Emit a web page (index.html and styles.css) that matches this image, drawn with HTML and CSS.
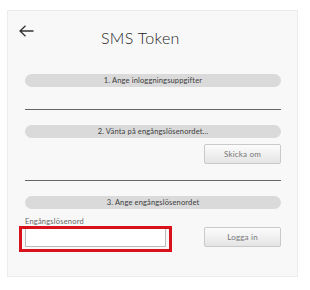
FILE: index.html
```html
<!DOCTYPE html>
<html lang="sv">
<head>
  <meta charset="UTF-8">
  <title>SMS Token</title>
  <link rel="stylesheet" href="styles.css">
</head>
<body>
  <div class="card">
    <div class="card-header">
      <svg class="back-arrow" width="15" height="12" viewBox="0 0 15 12">
        <path d="M14.5 6H1M6.5 0.8L1 6l5.5 5.2" fill="none" stroke="#333" stroke-width="1.3"/>
      </svg>
      <div class="card-title">SMS Token</div>
    </div>

    <div class="step-pill step-first">1. Ange inloggningsuppgifter</div>
    <div class="divider"></div>

    <div class="step-pill">2. Vänta på engångslösenordet...</div>
    <div class="btn-row">
      <button class="btn">Skicka om</button>
    </div>
    <div class="divider"></div>

    <div class="step-pill">3. Ange engångslösenordet</div>
    <div class="login-row">
      <div class="field">
        <label class="field-label" for="otp">Engångslösenord</label>
        <div class="input-wrap">
          <input class="field-input" id="otp" type="text">
          <div class="highlight-box"></div>
        </div>
      </div>
      <button class="btn">Logga in</button>
    </div>
  </div>
</body>
</html>
```

FILE: styles.css
```css
body {
  margin: 0;
  background: #fff;
  font-family: Lato, "Open Sans", sans-serif;
  color: #444;
}

.card {
  margin: 10px 0 0 7px;
  width: 291px;
  height: 267px;
  box-sizing: border-box;
  background: #f8f8f8;
  border: 1px solid #ececec;
  padding: 0 16px 0 17px;
}

.card-header {
  display: flex;
  align-items: flex-start;
  padding-top: 17px;
  height: 20px;
}

.back-arrow {
  margin-left: -6px;
  margin-top: -3px;
  flex-shrink: 0;
}

.card-title {
  margin-left: 67px;
  font-size: 16px;
  font-weight: 300;
  line-height: 20px;
  letter-spacing: 0.3px;
  color: #1e1e1e;
}

.step-pill {
  height: 13px;
  line-height: 13px;
  border-radius: 7px;
  background: #dadada;
  text-align: center;
  font-size: 7.5px;
  letter-spacing: 0.15px;
  color: #3c3c3c;
  margin-top: 15px;
}

.step-first {
  margin-top: 26px;
}

.divider {
  height: 1px;
  background: #666;
  margin-top: 22px;
}

.btn-row + .divider {
  margin-top: 16px;
}

.btn-row {
  display: flex;
  justify-content: flex-end;
  margin-top: 6px;
}

.btn {
  width: 77px;
  height: 20px;
  padding: 0;
  border: 1px solid #c9c9c9;
  border-radius: 2px;
  background: linear-gradient(#fcfcfc, #e4e4e4);
  font-family: Lato, "Open Sans", sans-serif;
  font-size: 8px;
  letter-spacing: 0.2px;
  color: #777;
}

.login-row {
  display: flex;
  justify-content: space-between;
  align-items: flex-end;
  margin-top: 8px;
}

.field {
  display: flex;
  flex-direction: column;
}

.field-label {
  font-size: 7.5px;
  line-height: 10px;
  letter-spacing: 0.2px;
  color: #666;
  margin-bottom: 1px;
}

.input-wrap {
  position: relative;
}

.field-input {
  display: block;
  width: 141px;
  height: 19px;
  box-sizing: border-box;
  border: 1px solid #bbb;
  background: #fff;
  margin: 0;
}

.highlight-box {
  position: absolute;
  top: -2px;
  left: -6px;
  right: -6px;
  bottom: -5px;
  border: 3px solid #d8111c;
}
```
